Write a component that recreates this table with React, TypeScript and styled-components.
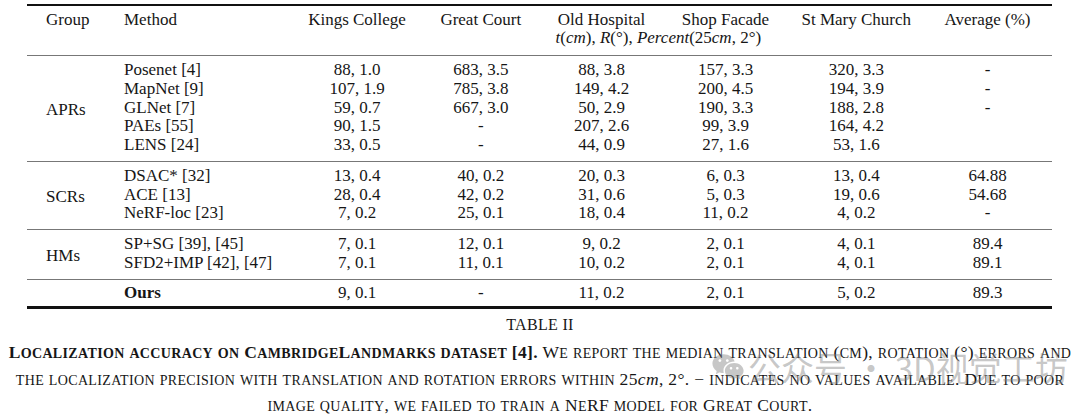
import React from 'react';
import styled, { createGlobalStyle } from 'styled-components';
import { RiWechatFill } from 'react-icons/ri';

const GlobalStyle = createGlobalStyle`
  html, body {
    margin: 0;
    padding: 0;
    background: #ffffff;
  }
  body {
    font-family: "Liberation Serif", "Times New Roman", serif;
    color: #161616;
  }
`;

const Page = styled.div`
  position: relative;
  width: 1080px;
  height: 416px;
  padding-top: 4px;
  box-sizing: border-box;
  overflow: hidden;
`;

const Table = styled.table`
  margin-left: 27px;
  width: 1025px;
  border-collapse: collapse;
  table-layout: fixed;
  font-size: 17px;
  border-top: 2px solid #111;
  border-bottom: 3px solid #111;
`;

const Head = styled.thead`
  border-bottom: 1px solid #777;

  tr:first-child th {
    padding-top: 5px;
  }
  tr:last-child th {
    padding-bottom: 8px;
  }
`;

const HeadCell = styled.th<{ $align?: 'left' | 'center'; $pad?: number }>`
  font-weight: normal;
  line-height: 18px;
  height: 18px;
  padding: 0 0 0 ${p => p.$pad ?? 0}px;
  text-align: ${p => p.$align ?? 'center'};
  white-space: nowrap;
  vertical-align: top;
`;

const Body = styled.tbody<{ $last?: boolean }>`
  border-bottom: ${p => (p.$last ? 'none' : '1px solid #777')};

  tr:first-child td {
    padding-top: ${p => (p.$last ? 4 : 5)}px;
  }
  tr:last-child td {
    padding-bottom: ${p => (p.$last ? 4 : 6)}px;
  }
`;

const Cell = styled.td<{ $align?: 'left' | 'center'; $pad?: number; $bold?: boolean }>`
  line-height: 18.75px;
  padding: 0 0 0 ${p => p.$pad ?? 0}px;
  text-align: ${p => p.$align ?? 'center'};
  font-weight: ${p => (p.$bold ? 'bold' : 'normal')};
  white-space: nowrap;
`;

const GroupCell = styled.td`
  text-align: left;
  padding-left: 19px;
  vertical-align: middle;
  white-space: nowrap;
  line-height: 18.75px;
`;

const Math = styled.span`
  font-family: "Liberation Serif", "Times New Roman", serif;
  font-weight: normal;

  i {
    font-style: italic;
  }
`;

const TableTitle = styled.div`
  margin-top: 6px;
  text-align: center;
  font-size: 16px;
  line-height: 20px;
  letter-spacing: 0.3px;
`;

const Caption = styled.p`
  margin: 5px 0 0;
  text-align: center;
  font-size: 17.5px;
  line-height: 25.5px;
  letter-spacing: 0.35px;
  white-space: nowrap;

  b {
    font-weight: bold;
  }
`;

const Small = styled.span`
  font-size: 0.8em;
  text-transform: uppercase;
`;

const Watermark = styled.div`
  position: absolute;
  left: 711px;
  top: 348px;
  display: flex;
  align-items: center;
  gap: 3px;
  color: rgba(130, 130, 130, 0.45);
  font-family: "Noto Sans CJK SC", "Noto Sans", sans-serif;
  font-size: 33px;
  line-height: 38px;
  pointer-events: none;
  white-space: nowrap;
`;

// LaTeX-style small caps: capitals stay full size, the rest become smaller capitals
const SC: React.FC<{ children: string }> = ({ children }) => {
  const parts = children.match(/[a-z]+|[^a-z]+/g) ?? [];
  return (
    <>
      {parts.map((p, i) => (/[a-z]/.test(p) ? <Small key={i}>{p}</Small> : <React.Fragment key={i}>{p}</React.Fragment>))}
    </>
  );
};

type Row = { method: string; vals: string[]; avg: string };

const apr: Row[] = [
  { method: 'Posenet [4]', vals: ['88, 1.0', '683, 3.5', '88, 3.8', '157, 3.3', '320, 3.3'], avg: '-' },
  { method: 'MapNet [9]', vals: ['107, 1.9', '785, 3.8', '149, 4.2', '200, 4.5', '194, 3.9'], avg: '-' },
  { method: 'GLNet [7]', vals: ['59, 0.7', '667, 3.0', '50, 2.9', '190, 3.3', '188, 2.8'], avg: '-' },
  { method: 'PAEs [55]', vals: ['90, 1.5', '-', '207, 2.6', '99, 3.9', '164, 4.2'], avg: '' },
  { method: 'LENS [24]', vals: ['33, 0.5', '-', '44, 0.9', '27, 1.6', '53, 1.6'], avg: '' },
];

const scr: Row[] = [
  { method: 'DSAC* [32]', vals: ['13, 0.4', '40, 0.2', '20, 0.3', '6, 0.3', '13, 0.4'], avg: '64.88' },
  { method: 'ACE [13]', vals: ['28, 0.4', '42, 0.2', '31, 0.6', '5, 0.3', '19, 0.6'], avg: '54.68' },
  { method: 'NeRF-loc [23]', vals: ['7, 0.2', '25, 0.1', '18, 0.4', '11, 0.2', '4, 0.2'], avg: '-' },
];

const hm: Row[] = [
  { method: 'SP+SG [39], [45]', vals: ['7, 0.1', '12, 0.1', '9, 0.2', '2, 0.1', '4, 0.1'], avg: '89.4' },
  { method: 'SFD2+IMP [42], [47]', vals: ['7, 0.1', '11, 0.1', '10, 0.2', '2, 0.1', '4, 0.1'], avg: '89.1' },
];

const widths = [83, 184, 126, 121.5, 120, 128, 133.5, 129];

const GroupBody: React.FC<{ label: string; rows: Row[] }> = ({ label, rows }) => (
  <Body>
    {rows.map((r, i) => (
      <tr key={r.method}>
        {i === 0 && <GroupCell rowSpan={rows.length}>{label}</GroupCell>}
        <Cell $align="left" $pad={14}>{r.method}</Cell>
        {r.vals.map((v, j) => (
          <Cell key={j}>{v}</Cell>
        ))}
        <Cell>{r.avg}</Cell>
      </tr>
    ))}
  </Body>
);

export default function App() {
  return (
    <Page>
      <GlobalStyle />
      <Table>
        <colgroup>
          {widths.map((w, i) => (
            <col key={i} style={{ width: w }} />
          ))}
        </colgroup>
        <Head>
          <tr>
            <HeadCell $align="left" $pad={19}>Group</HeadCell>
            <HeadCell $align="left" $pad={14}>Method</HeadCell>
            <HeadCell>Kings College</HeadCell>
            <HeadCell>Great Court</HeadCell>
            <HeadCell>Old Hospital</HeadCell>
            <HeadCell>Shop Facade</HeadCell>
            <HeadCell>St Mary Church</HeadCell>
            <HeadCell>Average (%)</HeadCell>
          </tr>
          <tr>
            <HeadCell />
            <HeadCell />
            <HeadCell />
            <HeadCell />
            <HeadCell colSpan={2} $align="left" $pad={14}>
              <Math>
                <i>t</i>(<i>cm</i>), <i>R</i>(°), <i>Percent</i>(25<i>cm</i>, 2°)
              </Math>
            </HeadCell>
            <HeadCell />
            <HeadCell />
          </tr>
        </Head>
        <GroupBody label="APRs" rows={apr} />
        <GroupBody label="SCRs" rows={scr} />
        <GroupBody label="HMs" rows={hm} />
        <Body $last>
          <tr>
            <GroupCell />
            <Cell $align="left" $pad={14} $bold>Ours</Cell>
            <Cell>9, 0.1</Cell>
            <Cell>-</Cell>
            <Cell>11, 0.2</Cell>
            <Cell>2, 0.1</Cell>
            <Cell>5, 0.2</Cell>
            <Cell>89.3</Cell>
          </tr>
        </Body>
      </Table>

      <TableTitle>TABLE II</TableTitle>
      <Caption>
        <b>
          <SC>Localization accuracy on CambridgeLandmarks dataset [4].</SC>
        </b>{' '}
        <SC>We report the median translation (cm), rotation (</SC>
        <Math>°</Math>
        <SC>) errors and</SC>
        <br />
        <SC>the localization precision with translation and rotation errors within</SC>{' '}
        <Math>
          25<i>cm</i>, 2°.
        </Math>{' '}
        <Math>−</Math> <SC>indicates no values available. Due to poor</SC>
        <br />
        <SC>image quality, we failed to train a NeRF model for Great Court.</SC>
      </Caption>

      <Watermark>
        <RiWechatFill size={34} />
        <span>公众号 · 3D视觉工坊</span>
      </Watermark>
    </Page>
  );
}
